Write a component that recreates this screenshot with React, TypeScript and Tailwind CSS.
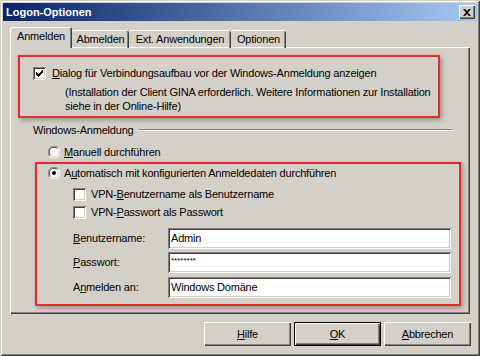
import React from 'react';

const raised =
  'shadow-[inset_1px_1px_0_#ffffff,inset_-1px_-1px_0_#404040,inset_-2px_-2px_0_#808080]';
const sunken =
  'shadow-[inset_1px_1px_0_#808080,inset_-1px_-1px_0_#ffffff,inset_2px_2px_0_#404040,inset_-2px_-2px_0_#d4d0c8]';

function Check({ checked }: { checked?: boolean }) {
  return (
    <div className={`w-[13px] h-[13px] bg-white shrink-0 relative ${sunken}`}>
      {checked && (
        <svg className="absolute left-[3px] top-[3px]" width="7" height="7" viewBox="0 0 7 7">
          <path d="M0 2h1v1h1v1h1v-1h1v-1h1v-1h1v-1h1v3h-1v1h-1v1h-1v1h-1v1h-1v-1h-1v-1h-1v-1h-1z" fill="#000" />
        </svg>
      )}
    </div>
  );
}

function Radio({ checked }: { checked?: boolean }) {
  return (
    <svg width="12" height="12" viewBox="0 0 12 12" className="shrink-0">
      <circle cx="6" cy="6" r="5.5" fill="#fff" />
      <path d="M10.2 1.8A5.5 5.5 0 0 0 1.8 10.2" stroke="#808080" strokeWidth="1" fill="none" />
      <path d="M9.4 2.6A4.5 4.5 0 0 0 2.6 9.4" stroke="#404040" strokeWidth="1" fill="none" />
      <path d="M1.8 10.2A5.5 5.5 0 0 0 10.2 1.8" stroke="#ffffff" strokeWidth="1" fill="none" />
      <path d="M2.6 9.4A4.5 4.5 0 0 0 9.4 2.6" stroke="#d4d0c8" strokeWidth="1" fill="none" />
      {checked && <circle cx="6" cy="6" r="2" fill="#000" />}
    </svg>
  );
}

function Field({ label, children }: { label: React.ReactNode; children: React.ReactNode }) {
  return (
    <div className="flex items-center">
      <div className="w-[95px]">{label}</div>
      <div className={`w-[283px] h-[21px] bg-white flex items-center px-[3px] ${sunken}`}>{children}</div>
    </div>
  );
}

function Button({ children, primary }: { children: React.ReactNode; primary?: boolean }) {
  return (
    <div
      className={`w-[87px] h-[24px] flex items-center justify-center ${
        primary
          ? 'shadow-[inset_0_0_0_1px_#000000,inset_2px_2px_0_#ffffff,inset_-2px_-2px_0_#404040,inset_-3px_-3px_0_#808080]'
          : raised
      }`}
    >
      {children}
    </div>
  );
}

export default function App() {
  return (
    <div
      className="w-[480px] h-[356px] bg-[#d4d0c8] p-[3px] text-[11px] tracking-[-0.2px] whitespace-nowrap text-black shadow-[inset_1px_1px_0_#d4d0c8,inset_-1px_-1px_0_#404040,inset_2px_2px_0_#ffffff,inset_-2px_-2px_0_#808080]"
      style={{ fontFamily: '"Liberation Sans", Arial, sans-serif' }}
    >
      {/* title bar */}
      <div className="h-[18px] bg-gradient-to-r from-[#0a246a] to-[#a6caf0] flex items-center justify-between">
        <span className="ml-[3px] font-bold text-white tracking-normal">Logon-Optionen</span>
        <div className={`w-[16px] h-[14px] mr-[2px] bg-[#d4d0c8] flex items-center justify-center ${raised}`}>
          <svg width="8" height="7" viewBox="0 0 8 7">
            <path d="M0 0h2l2 2l2-2h2l-3 3.5l3 3.5h-2l-2-2l-2 2h-2l3-3.5z" fill="#000" />
          </svg>
        </div>
      </div>

      <div className="pl-[7px] pt-[6px]">
        {/* tabs */}
        <div className="flex items-end h-[21px] relative z-10 -mb-[1px]">
          <div className="w-[62px] h-[21px] bg-[#d4d0c8] rounded-t-[2px] flex items-center justify-center pb-[2px] shadow-[inset_1px_1px_0_#ffffff,inset_-1px_0_0_#404040,inset_-2px_0_0_#808080]">
            Anmelden
          </div>
          <div className="w-[57px] h-[18px] rounded-t-[2px] flex items-center justify-center shadow-[inset_0_1px_0_#ffffff,inset_-1px_0_0_#404040,inset_-2px_0_0_#808080]">
            Abmelden
          </div>
          <div className="w-[102px] h-[18px] rounded-t-[2px] flex items-center justify-center shadow-[inset_0_1px_0_#ffffff,inset_-1px_0_0_#404040,inset_-2px_0_0_#808080]">
            Ext. Anwendungen
          </div>
          <div className="w-[55px] h-[18px] rounded-t-[2px] flex items-center justify-center shadow-[inset_0_1px_0_#ffffff,inset_-1px_0_0_#404040,inset_-2px_0_0_#808080]">
            Optionen
          </div>
        </div>

        {/* panel */}
        <div className={`w-[460px] h-[267px] flex flex-col ${raised}`}>
          <div className="ml-[8px] mt-[8px] w-[422px] h-[63px] border-2 border-[#e32b2b] pt-[9px] pl-[13px] shadow-[2px_2px_5px_rgba(0,0,0,0.3)]">
            <div className="flex items-center gap-[6px] leading-[15px]">
              <Check checked />
              <span>
                <u>D</u>ialog für Verbindungsaufbau vor der Windows-Anmeldung anzeigen
              </span>
            </div>
            <div className="pl-[32px] mt-[4px] leading-[14px]">
              (Installation der Client GINA erforderlich. Weitere Informationen zur Installation
              <br />
              siehe in der Online-Hilfe)
            </div>
          </div>

          <div className="ml-[23px] mt-[5px] w-[419px] h-[14px] flex items-center">
            <span>Windows-Anmeldung</span>
            <div className="flex-1 ml-[5px] h-[2px] border-t border-[#808080] border-b border-b-white" />
          </div>

          <div className="ml-[38px] mt-[8px] h-[14px] flex items-center gap-[4px]">
            <Radio />
            <span>
              <u>M</u>anuell durchführen
            </span>
          </div>

          <div className="ml-[25px] mt-[3px] w-[426px] h-[144px] border-2 border-[#e32b2b] pl-[11px] pt-[2px] shadow-[2px_2px_5px_rgba(0,0,0,0.3)]">
            <div className="h-[14px] flex items-center gap-[4px]">
              <Radio checked />
              <span>
                A<u>u</u>tomatisch mit konfigurierten Anmeldedaten durchführen
              </span>
            </div>
            <div className="pl-[25px]">
              <div className="mt-[7px] h-[14px] flex items-center gap-[5px]">
                <Check />
                <span>
                  VPN-<u>B</u>enutzername als Benutzername
                </span>
              </div>
              <div className="mt-[4px] h-[14px] flex items-center gap-[5px]">
                <Check />
                <span>
                  VPN-<u>P</u>asswort als Passwort
                </span>
              </div>
              <div className="mt-[9px] flex flex-col gap-[3px]">
                <Field label={<><u>B</u>enutzername:</>}>Admin</Field>
                <Field label={<><u>P</u>asswort:</>}>
                  <span className="text-[8px] tracking-normal -mt-[3px]">********</span>
                </Field>
                <div className="mt-[1px]">
                  <Field label={<>A<u>n</u>melden an:</>}>Windows Domäne</Field>
                </div>
              </div>
            </div>
          </div>
        </div>

        {/* buttons */}
        <div className="w-[461px] mt-[8px] flex justify-end gap-[3px]">
          <Button>
            <u>H</u>ilfe
          </Button>
          <Button primary>
            <u>O</u>K
          </Button>
          <Button>
            <u>A</u>bbrechen
          </Button>
        </div>
      </div>
    </div>
  );
}
